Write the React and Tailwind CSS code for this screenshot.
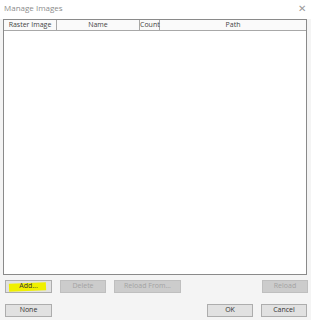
// Manage Images dialog
const font = { fontFamily: '"Open Sans", "Noto Sans", sans-serif' };

const Btn = ({ w, disabled, children, className = "" }) => (
    <div
        className={`flex h-[13px] items-center justify-center border text-[7px] ${disabled ? "border-[#bfbfbf] bg-[#cccccc] text-[#a3a3a3]" : "border-[#adadad] bg-[#e1e1e1] text-[#333]"} ${w} ${className}`}
    >
        {children}
    </div>
);

const App = () => {
    return (
        <div className="flex h-[320px] w-[311px] flex-col bg-[#f4f4f4]" style={font}>
            <div className="flex h-[19px] items-start justify-between bg-white pl-[4px] pr-[5px] pt-[2px]">
                <span className="text-[8px] text-[#8c8c8c]">Manage Images</span>
                <span className="text-[10px] leading-[12px] text-[#9a9a9a]">✕</span>
            </div>

            <div className="ml-[3px] flex h-[256px] w-[304px] flex-col border border-[#8a8a8a] bg-white">
                <div className="flex h-[11px] border-b border-[#a8a8a8] bg-[#fafafa] text-[7px] leading-[10px] text-[#444]">
                    <div className="w-[53px] border-r border-[#a8a8a8] text-center">Raster Image</div>
                    <div className="w-[83px] border-r border-[#a8a8a8] text-center">Name</div>
                    <div className="w-[20px] border-r border-[#a8a8a8] text-center">Count</div>
                    <div className="flex-1 text-center">Path</div>
                </div>
                <div className="flex-1" />
            </div>

            <div className="mt-[5px] flex h-[13px] pl-[5px]">
                <div className="relative flex h-[13px] w-[47px] items-center justify-center border border-[#adadad] bg-[#e1e1e1] text-[7px] text-[#333]">
                    <div className="absolute left-[3px] top-[2px] h-[8px] w-[37px] -rotate-2 bg-[#f0f000]" />
                    <span className="relative">Add...</span>
                </div>
                <Btn w="w-[46px]" disabled className="ml-[8px]">Delete</Btn>
                <Btn w="w-[67px]" disabled className="ml-[8px]">Reload From...</Btn>
                <Btn w="w-[46px]" disabled className="ml-auto mr-[3px]">Reload</Btn>
            </div>

            <div className="mt-[11px] flex h-[13px] pl-[5px]">
                <Btn w="w-[47px]">None</Btn>
                <Btn w="w-[46px]" className="ml-auto">OK</Btn>
                <Btn w="w-[46px]" className="ml-[8px] mr-[4px]">Cancel</Btn>
            </div>
        </div>
    );
};

export default App;
